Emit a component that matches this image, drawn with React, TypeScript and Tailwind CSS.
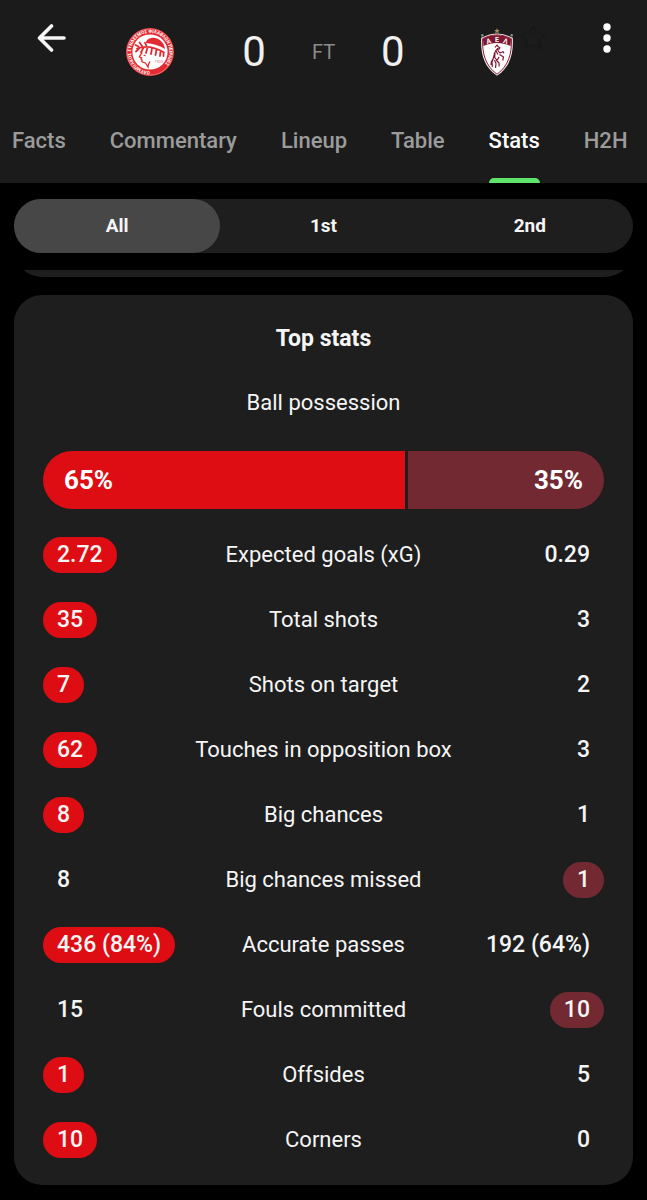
import { useState } from 'react';
import { clsx } from 'clsx';
import { Star } from 'lucide-react';

type Side = 'home' | 'away';

type Stat = {
  label: string;
  home: string;
  away: string;
  leader: Side;
};

const tabs = ['Facts', 'Commentary', 'Lineup', 'Table', 'Stats', 'H2H'];
const periods = ['All', '1st', '2nd'];

const possession = { home: 65, away: 35 };

const stats: Stat[] = [
  { label: 'Expected goals (xG)', home: '2.72', away: '0.29', leader: 'home' },
  { label: 'Total shots', home: '35', away: '3', leader: 'home' },
  { label: 'Shots on target', home: '7', away: '2', leader: 'home' },
  { label: 'Touches in opposition box', home: '62', away: '3', leader: 'home' },
  { label: 'Big chances', home: '8', away: '1', leader: 'home' },
  { label: 'Big chances missed', home: '8', away: '1', leader: 'away' },
  { label: 'Accurate passes', home: '436 (84%)', away: '192 (64%)', leader: 'home' },
  { label: 'Fouls committed', home: '15', away: '10', leader: 'away' },
  { label: 'Offsides', home: '1', away: '5', leader: 'home' },
  { label: 'Corners', home: '10', away: '0', leader: 'home' },
];

const HomeCrest = () => (
  <svg viewBox="0 0 48 48" className="size-12" aria-hidden="true">
    <defs>
      <path id="ring" d="M24 43.2a19.2 19.2 0 1 1 .1 0" />
    </defs>
    <circle cx="24" cy="24" r="24" fill="#e32a30" />
    <circle cx="24" cy="24" r="23.1" fill="none" stroke="#f6b9bb" strokeWidth="0.5" />
    <circle cx="24" cy="24" r="17.6" fill="#fff" />
    <text fill="#fff" fontSize="4.6" fontWeight="700" fontFamily="Roboto, sans-serif">
      <textPath href="#ring">ΟΛΥΜΠΙΑΚΟΣ ΣΥΝΔΕΣΜΟΣ ΦΙΛΑΘΛΩΝ ΠΕΙΡΑΙΩΣ</textPath>
    </text>
    {/* hair */}
    <path d="M20 15c0-4 6-6.500 11-4.500 4.500 2 7.500 5.500 8 10.500-5-3.500-12-5.500-19-6z" fill="#e32a30" />
    {/* laurel wreath */}
    <path
      d="M11 20.500c8-3 17-2 27 4M12.500 18.500l-3-1.500M16 18l-2.500-3.500M20.500 17.800l-1.500-3M13.500 20l-3.500 3.500M17.500 19.500l-2.500 5M21.500 19.500l-1.500 5.500M26 20l-1 6M30.500 21.500l-1 5.500M34.500 23.500l-.5 4.500M37.500 25v3"
      fill="none"
      stroke="#e32a30"
      strokeWidth="1.800"
      strokeLinecap="round"
    />
    {/* face profile */}
    <path
      d="M16 24.500c-.5 1.500-2.300 3.200-2.600 4.600l2.200.6-.6 1.500 1.100.8-.3 1.500c.9 1.300 2.800.3 4 2l2.200 3.500c.2-2.700.7-3.500 1.900-5.500M17.500 27l2 .6"
      fill="none"
      stroke="#e32a30"
      strokeWidth="1.300"
    />
    <text x="28.500" y="34.500" fill="#e06a6f" fontSize="3.800" fontFamily="Roboto, sans-serif">
      1925
    </text>
  </svg>
);

const AwayCrest = () => (
  <svg viewBox="0 0 48 48" className="size-12" aria-hidden="true">
    <path d="M24 0l.8 1.900 2 .1-1.500 1.300.5 2L24 4.200l-1.800 1.100.5-2L21.200 2l2-.1z" fill="#a88958" />
    <circle cx="9.300" cy="7.300" r="1.200" fill="#7d9a86" />
    <circle cx="38.700" cy="7.300" r="1.200" fill="#7d9a86" />
    <path
      d="M24 5.500c4.500 0 10 1.500 15.800 4.300.8 16-2.500 29-15.800 38C10.700 38.800 7.400 25.800 8.200 9.800 14 7 19.500 5.500 24 5.500z"
      fill="#f4e9eb"
    />
    <path
      d="M24 6.900c4.500 0 9.500 1.300 14.400 3.800.5 14.700-2.700 27-14.400 35.500C12.300 37.700 9.100 25.400 9.600 10.700 14.500 8.200 19.500 6.900 24 6.900z"
      fill="#fff"
      stroke="#8b2038"
      strokeWidth="1"
    />
    <path d="M10 10.800C18.500 6.200 29.500 6.200 38 10.800l-.4 7.200c-8.500-4-18.700-4-27.200 0z" fill="#7d1830" />
    <g fill="#fff" fontSize="7" fontWeight="700" fontFamily="Roboto, sans-serif" textAnchor="middle">
      <text x="15.500" y="15.400" transform="rotate(-16 15.500 13)">Α</text>
      <text x="24" y="13.600">Ε</text>
      <text x="32.500" y="15.400" transform="rotate(16 32.500 13)">Λ</text>
    </g>
    {/* rearing horse */}
    <path
      d="M22 19.500l2-2.500.9 1.500 2 1.300-.7 1.200-1.900-.3c.3 2 1.300 3.300 2.700 4.300M24 21c-2 2.500-3.500 5-3.500 8.500l-1.500 4.500.3 5M27 25l3-1.300 1 1.500M26.500 26.500l4 2.500-.8 3.500M26 29c-.5 1.500-1.200 2.500-2.500 3.500l2.500 2.500.2 3.500M22 24.500l-.3 5 2 2.500M20.500 31c-1.500 1-2.500 3-2.500 6M21.500 32l1.500 3.500-.5 4.500M22.500 22l2.500 4.500"
      fill="none"
      stroke="#7d1830"
      strokeWidth="1.200"
      strokeLinejoin="round"
    />
  </svg>
);

const BackIcon = () => (
  <svg viewBox="0 0 30 30" className="size-[30px]" fill="none" stroke="currentColor" strokeWidth="3.600" aria-hidden="true">
    <path d="M27 15H3M14.500 3L2.500 15l12 12" strokeLinecap="round" strokeLinejoin="round" />
  </svg>
);

const MoreIcon = () => (
  <svg viewBox="0 0 40 40" className="size-10" fill="currentColor" aria-hidden="true">
    <circle cx="20" cy="9" r="3.700" />
    <circle cx="20" cy="20" r="3.700" />
    <circle cx="20" cy="31" r="3.700" />
  </svg>
);

const Header = () => {
  const [active, setActive] = useState('Stats');

  return (
    <header className="bg-[#1b1b1b]">
      <div className="flex h-[97px] items-start px-5 pt-[14px]">
        <button type="button" aria-label="Back" className="flex h-12 w-16 items-center justify-center text-[#f5f5f5]">
          <BackIcon />
        </button>
        <div className="flex flex-1 items-center justify-center gap-[68px] pt-[14px]">
          <HomeCrest />
          <div className="flex items-center gap-[46px]">
            <span className="text-[42px] leading-[48px] text-[#f0f0f0]">0</span>
            <span className="text-[20px] text-[#8c8c8c]">FT</span>
            <span className="text-[42px] leading-[48px] text-[#f0f0f0]">0</span>
          </div>
          <div className="relative">
            <AwayCrest />
            {/* follow star, almost hidden against the header */}
            <Star className="absolute -top-1 left-[46px] size-7 text-[#181818]" strokeWidth={1.5} aria-hidden="true" />
          </div>
        </div>
        <button type="button" aria-label="More options" className="flex h-12 w-16 items-center justify-end text-white">
          <MoreIcon />
        </button>
      </div>
      <nav className="flex gap-[44px] overflow-hidden px-3" role="tablist">
        {tabs.map((tab) => (
          <button
            key={tab}
            type="button"
            role="tab"
            aria-selected={tab === active}
            onClick={() => setActive(tab)}
            className={clsx(
              'relative h-[86px] shrink-0 text-[22px] font-medium',
              tab === active ? 'text-white' : 'text-[#9b9b9b]',
            )}
          >
            {tab}
            {tab === active && <span className="absolute inset-x-0 bottom-0 h-[5px] rounded-t-md bg-[#5fe36b]" />}
          </button>
        ))}
      </nav>
    </header>
  );
};

const PeriodSwitch = () => {
  const [period, setPeriod] = useState('All');

  return (
    <div className="mt-4 grid grid-cols-3 rounded-full bg-[#1e1e1e]">
      {periods.map((item) => (
        <button
          key={item}
          type="button"
          aria-pressed={item === period}
          onClick={() => setPeriod(item)}
          className={clsx('h-[54px] rounded-full text-[19px] font-bold text-[#f5f5f5]', item === period && 'bg-[#474747]')}
        >
          {item}
        </button>
      ))}
    </div>
  );
};

const Value = ({ value, side, leader }: { value: string; side: Side; leader: Side }) => (
  <span
    className={clsx(
      'inline-flex h-9 items-center rounded-full px-[14px] text-[23px] font-medium whitespace-nowrap',
      side === leader && side === 'home' && 'bg-[#de0d14]',
      side === leader && side === 'away' && 'bg-[#722932]',
    )}
  >
    {value}
  </span>
);

const TopStats = () => (
  <section className="mt-[18px] rounded-[28px] bg-[#1e1e1e] px-[29px] pt-7 pb-[13px] text-[#f5f5f5]">
    <h2 className="text-center text-[23px] leading-8 font-bold">Top stats</h2>
    <h3 className="mt-8 text-center text-[22px] leading-8">Ball possession</h3>
    <div className="mt-8 flex h-[58px] gap-[3px] overflow-hidden rounded-full text-[26px] font-bold text-white">
      <div className="flex flex-1 items-center bg-[#de0d14] px-[21px]">{possession.home}%</div>
      <div
        className="flex shrink-0 items-center justify-end bg-[#722932] px-[21px]"
        style={{ width: `${possession.away}%` }}
      >
        {possession.away}%
      </div>
    </div>
    <table className="mt-[13px] w-full table-fixed text-[22px] leading-8">
      <tbody>
        {stats.map(({ label, home, away, leader }) => (
          <tr key={label} className="h-[65px]">
            <td className="w-1/4 p-0 align-middle">
              <Value value={home} side="home" leader={leader} />
            </td>
            <th scope="row" className="p-0 text-center font-normal whitespace-nowrap">
              {label}
            </th>
            <td className="w-1/4 p-0 text-right align-middle">
              <Value value={away} side="away" leader={leader} />
            </td>
          </tr>
        ))}
      </tbody>
    </table>
  </section>
);

export default function App() {
  return (
    <div className="min-h-screen bg-black font-['Roboto',sans-serif]">
      <Header />
      <main className="px-[14px] pb-[14px]">
        <PeriodSwitch />
        {/* bottom edge of the card scrolled under the switch */}
        <div className="mt-[17px] flex h-[7px] items-end overflow-hidden">
          <div className="h-14 w-full shrink-0 rounded-[28px] bg-[#1e1e1e]" />
        </div>
        <TopStats />
      </main>
    </div>
  );
}
